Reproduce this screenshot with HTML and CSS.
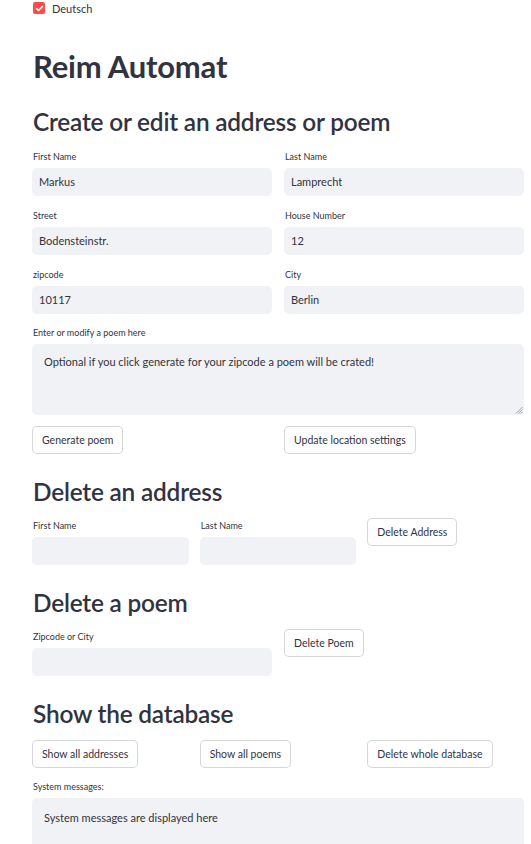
FILE: index.html
```html
<!DOCTYPE html>
<html lang="en">
<head>
<meta charset="utf-8">
<link rel="stylesheet" href="styles.css">
</head>
<body>
<main class="page">
  <label class="check">
    <span class="box"><svg width="9" height="9" viewBox="0 0 10 10"><path d="M1.8 5.2 L4 7.3 L8.3 2.8" fill="none" stroke="#fff" stroke-width="1.6" stroke-linecap="round" stroke-linejoin="round"/></svg></span>
    <span>Deutsch</span>
  </label>

  <h1 class="title">Reim Automat</h1>

  <h2 class="h2 first">Create or edit an address or poem</h2>
  <div class="grid2 form">
    <div class="field"><div class="lbl">First Name</div><div class="input">Markus</div></div>
    <div class="field"><div class="lbl">Last Name</div><div class="input">Lamprecht</div></div>
    <div class="field"><div class="lbl">Street</div><div class="input">Bodensteinstr.</div></div>
    <div class="field"><div class="lbl">House Number</div><div class="input">12</div></div>
    <div class="field"><div class="lbl">zipcode</div><div class="input">10117</div></div>
    <div class="field"><div class="lbl">City</div><div class="input">Berlin</div></div>
  </div>
  <div class="field poem">
    <div class="lbl">Enter or modify a poem here</div>
    <div class="textarea">Optional if you click generate for your zipcode a poem will be crated!
      <svg class="grip" width="9" height="9" viewBox="0 0 9 9"><path d="M8.5 2 L2 8.5 M8.5 4.5 L4.5 8.5 M8.5 7 L7 8.5" stroke="#8a8c95" stroke-width="0.8"/></svg>
    </div>
  </div>
  <div class="grid2 btnrow">
    <div><button class="btn">Generate poem</button></div>
    <div><button class="btn">Update location settings</button></div>
  </div>

  <h2 class="h2">Delete an address</h2>
  <div class="grid3 section">
    <div class="field pad"><div class="lbl">First Name</div><div class="input"></div></div>
    <div class="field pad"><div class="lbl">Last Name</div><div class="input"></div></div>
    <div><button class="btn">Delete Address</button></div>
  </div>

  <h2 class="h2">Delete a poem</h2>
  <div class="grid2 section">
    <div class="field pad"><div class="lbl">Zipcode or City</div><div class="input"></div></div>
    <div><button class="btn">Delete Poem</button></div>
  </div>

  <h2 class="h2">Show the database</h2>
  <div class="grid3 section dbrow">
    <div><button class="btn">Show all addresses</button></div>
    <div><button class="btn">Show all poems</button></div>
    <div><button class="btn">Delete whole database</button></div>
  </div>
  <div class="field">
    <div class="lbl">System messages:</div>
    <div class="textarea sys">System messages are displayed here</div>
  </div>
</main>
</body>
</html>
```
FILE: styles.css
```css
* { box-sizing: border-box; }
html, body { margin: 0; padding: 0; background: #fff; }
body {
  font-family: "Lato", "Liberation Sans", sans-serif;
  color: #31333f;
  overflow: hidden;
  height: 844px;
}
.page {
  width: 531px;
  padding: 0 7px 0 32px;
  display: flex;
  flex-direction: column;
}
.check {
  display: flex;
  align-items: center;
  gap: 7px;
  height: 16px;
  padding-left: 1px;
  font-size: 11px;
}
.box {
  width: 12px; height: 12px;
  border-radius: 2px;
  background: #ff4b4b;
  display: flex; align-items: center; justify-content: center;
}
.title {
  margin: 30px 0 0 0;
  padding-left: 1px;
  font-size: 31px;
  line-height: 40px;
  height: 40px;
  font-weight: 700;
  letter-spacing: -0.2px;
}
.h2 {
  margin: 21px 0 0 0;
  padding-left: 1px;
  font-size: 24.4px;
  line-height: 34px;
  height: 34px;
  font-weight: 600;
  letter-spacing: -0.2px;
}
.h2.first { margin-top: 19px; }
.grid2 {
  display: grid;
  grid-template-columns: 1fr 1fr;
  column-gap: 12px;
}
.grid3 {
  display: grid;
  grid-template-columns: 1fr 1fr 1fr;
  column-gap: 11px;
}
.form { margin-top: 12px; }
.field { display: flex; flex-direction: column; }
.form .field { margin-bottom: 14px; }
.field.pad { padding-top: 2px; }
.lbl {
  font-size: 9px;
  line-height: 11px;
  height: 11px;
  margin-bottom: 6px;
  padding-left: 1px;
}
.input {
  height: 28px;
  background: #f0f2f6;
  border-radius: 5px;
  padding: 0 7px;
  font-size: 11px;
  line-height: 28px;
}
.poem { margin-top: -1px; }
.textarea {
  position: relative;
  height: 71px;
  background: #f0f2f6;
  border-radius: 5px;
  padding: 10px 12px;
  font-size: 11px;
  line-height: 16px;
}
.grip { position: absolute; right: 1px; bottom: 1px; }
.textarea.sys { height: 60px; padding-top: 12px; }
.btnrow { margin-top: 11px; }
.btn {
  font-family: inherit;
  font-size: 10.5px;
  color: #31333f;
  height: 28px;
  padding: 0 9px;
  background: #fff;
  border: 1px solid rgba(49, 51, 63, 0.2);
  border-radius: 5px;
}
.section { margin-top: 9px; }
.dbrow { margin-bottom: 13px; }
```
